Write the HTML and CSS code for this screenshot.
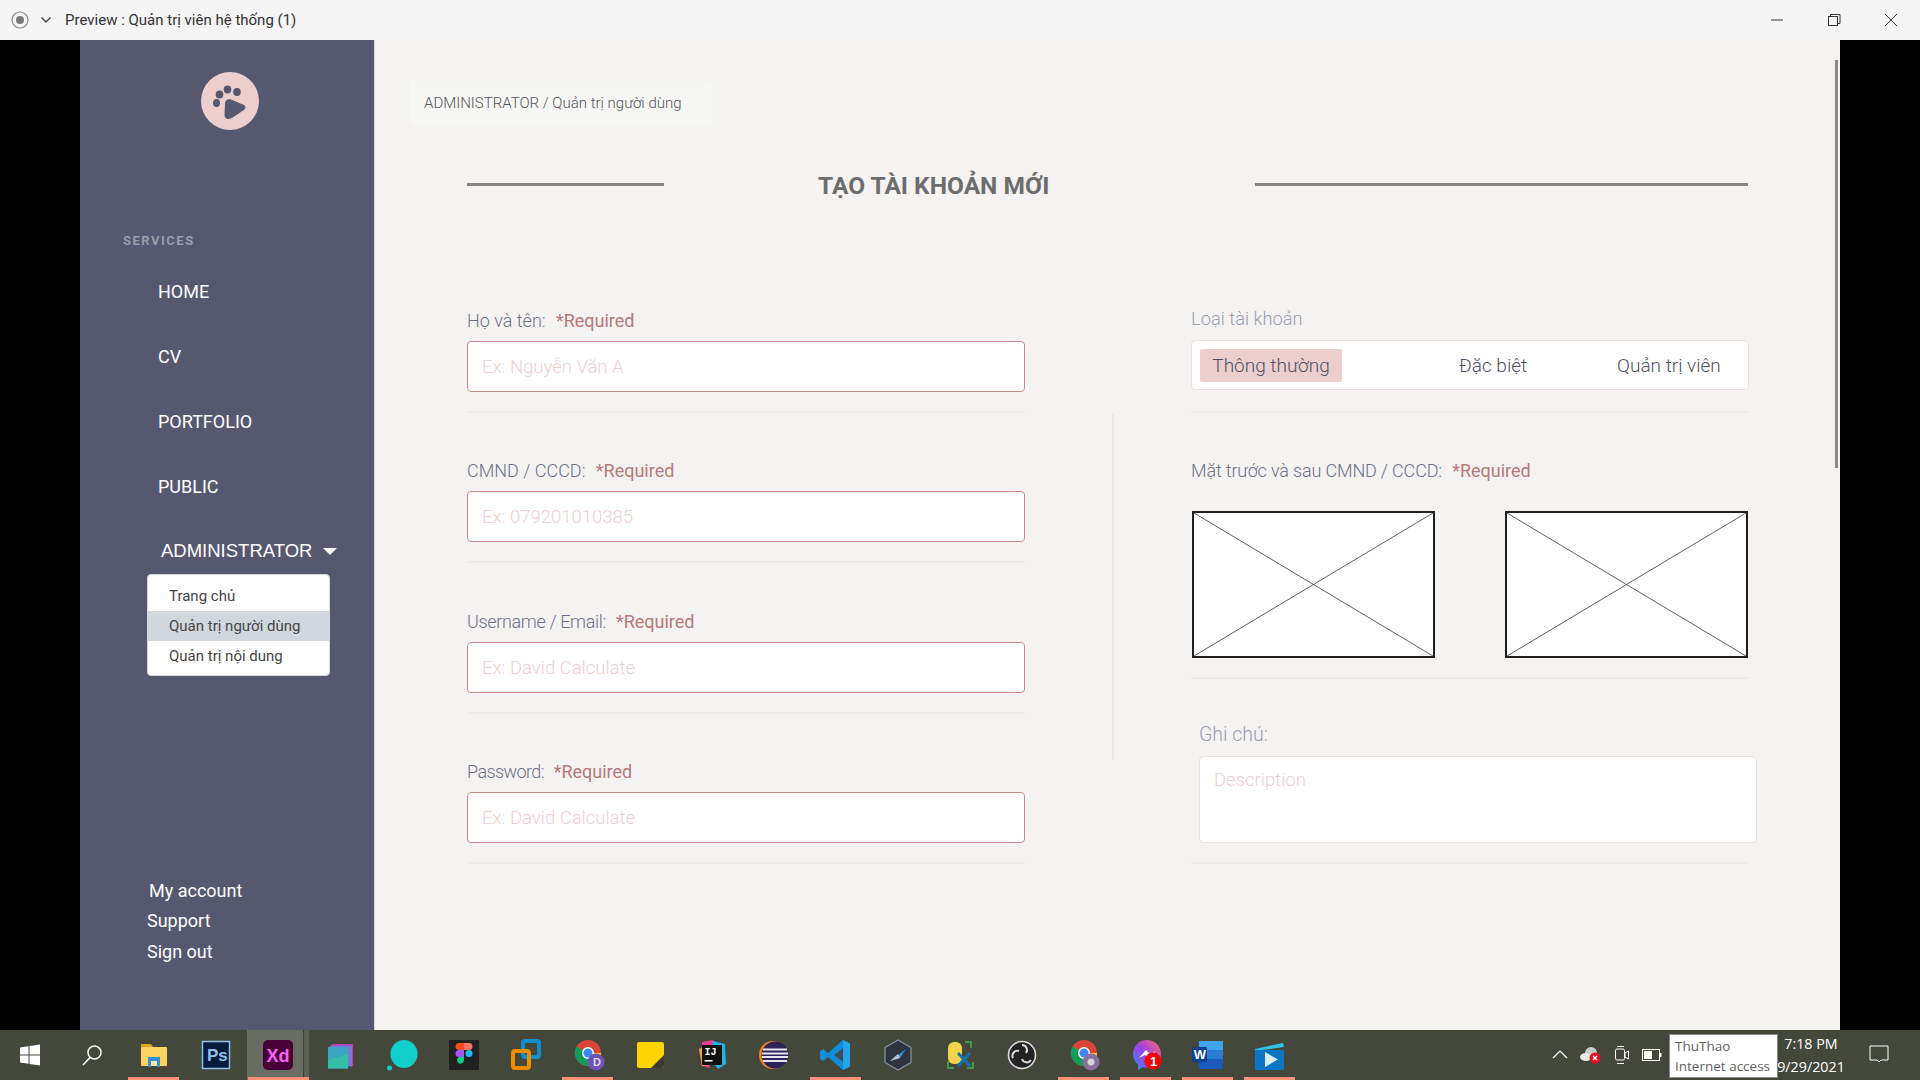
FILE: index.html
```html
<!DOCTYPE html>
<html lang="vi">
<head>
    <meta charset="UTF-8">
    <title>Preview : Quản trị viên hệ thống (1)</title>
    <link rel="stylesheet" href="styles.css">
</head>
<body>
    <header class="titlebar">
        <svg class="rec" width="18" height="18" viewBox="0 0 18 18"><circle cx="9" cy="9" r="8" fill="none" stroke="#8a8a8a" stroke-width="1.2"/><circle cx="9" cy="9" r="4" fill="#7a7a7a"/></svg>
        <svg class="drop" width="12" height="12" viewBox="0 0 12 12"><path d="M1.5 3.5 6 8l4.5-4.5" fill="none" stroke="#444" stroke-width="1.4"/></svg>
        <span class="titlebar-text">Preview : Quản trị viên hệ thống (1)</span>
        <div class="win-btns">
            <svg width="14" height="14" viewBox="0 0 14 14"><path d="M1 7h12" stroke="#333" stroke-width="1"/></svg>
            <svg width="14" height="14" viewBox="0 0 14 14"><path d="M3.5 3V1.5h9.500v9H11" fill="none" stroke="#333"/><rect x="1.500" y="3.500" width="9" height="9" fill="none" stroke="#333"/></svg>
            <svg width="14" height="14" viewBox="0 0 14 14"><path d="M1 1l12 12M13 1 1 13" stroke="#333" stroke-width="1"/></svg>
        </div>
    </header>

    <div class="stage">
        <aside class="sidebar">
            <div class="logo">
                <svg width="58" height="58" viewBox="0 0 58 58">
                    <circle cx="29" cy="29" r="29" fill="#eccfcc"/>
                    <g fill="#55586f">
                        <ellipse cx="15.500" cy="31" rx="3.500" ry="4"/>
                        <ellipse cx="18.500" cy="22.500" rx="3.800" ry="4"/>
                        <ellipse cx="26.500" cy="17.500" rx="3.800" ry="4"/>
                        <ellipse cx="36" cy="20" rx="3.800" ry="4"/>
                        <path d="M24 31Q25 26 30 27.500L43 33Q46 35.500 43 38L31 46Q24 49 23.500 43z"/>
                    </g>
                </svg>
            </div>
            <div class="side-heading">SERVICES</div>
            <nav class="side-nav">
                <a class="side-link">HOME</a>
                <a class="side-link">CV</a>
                <a class="side-link">PORTFOLIO</a>
                <a class="side-link">PUBLIC</a>
            </nav>
            <div class="side-admin">ADMINISTRATOR <span class="caret"></span></div>
            <ul class="admin-menu">
                <li>Trang chủ</li>
                <li class="active">Quản trị người dùng</li>
                <li>Quản trị nội dung</li>
            </ul>
            <div class="side-bottom">
                <a class="acc">My account</a>
                <a>Support</a>
                <a>Sign out</a>
            </div>
        </aside>

        <main class="main">
            <div class="breadcrumb">ADMINISTRATOR / Quản trị người dùng</div>
            <div class="heading">
                <span class="heading-line short"></span>
                <h1>TẠO TÀI KHOẢN MỚI</h1>
                <span class="heading-line"></span>
            </div>

            <form class="form">
                <div class="col">
                    <div class="field">
                        <label>Họ và tên: <em>*Required</em></label>
                        <input type="text" placeholder="Ex: Nguyễn Văn A">
                    </div>
                    <div class="field">
                        <label>CMND / CCCD: <em>*Required</em></label>
                        <input type="text" placeholder="Ex: 079201010385">
                    </div>
                    <div class="field field-tall">
                        <label class="tight">Username / Email: <em>*Required</em></label>
                        <input type="text" placeholder="Ex: David Calculate">
                    </div>
                    <div class="field">
                        <label class="tighter">Password: <em>*Required</em></label>
                        <input type="text" placeholder="Ex: David Calculate">
                    </div>
                </div>

                <div class="col-rule"></div>

                <div class="col">
                    <div class="field field-types">
                        <label class="faint">Loại tài khoản</label>
                        <div class="types">
                            <span class="type on">Thông thường</span>
                            <span class="type t2">Đặc biệt</span>
                            <span class="type t3">Quản trị viên</span>
                        </div>
                    </div>
                    <div class="field field-images">
                        <label class="slight">Mặt trước và sau CMND / CCCD: <em>*Required</em></label>
                        <div class="images">
                            <svg class="ph" viewBox="0 0 243 147" preserveAspectRatio="none"><path d="M0 0 243 147M243 0 0 147" stroke="#333" stroke-width=".8" fill="none"/></svg>
                            <svg class="ph" viewBox="0 0 243 147" preserveAspectRatio="none"><path d="M0 0 243 147M243 0 0 147" stroke="#333" stroke-width=".8" fill="none"/></svg>
                        </div>
                    </div>
                    <div class="field field-note">
                        <label class="faint">Ghi chú:</label>
                        <textarea placeholder="Description"></textarea>
                    </div>
                </div>
            </form>
            <div class="scroll-thumb"></div>
        </main>
    </div>

    <footer class="taskbar">
        <div class="task start">
            <svg width="24" height="24" viewBox="0 0 24 24" fill="#fff"><path d="M2 4.500 10.500 3.300V11.500H2zM11.500 3.100 22 1.600V11.500H11.500zM2 12.500h8.500v8.200L2 19.500zM11.500 12.500H22v9.900l-10.500-1.500z"/></svg>
        </div>
        <div class="task start">
            <svg width="24" height="24" viewBox="0 0 24 24" fill="none" stroke="#fff" stroke-width="1.500"><circle cx="14.500" cy="9.500" r="6.500"/><path d="M10 14.500 3 22"/></svg>
        </div>
        <div class="task open">
            <svg width="30" height="30" viewBox="0 0 30 30"><path d="M2 4h10l2 3h-12z" fill="#e0a526"/><rect x="2" y="7" width="26" height="19" rx="1" fill="#fdd35f"/><path d="M9 17h12v10h-3v-6h-6v6H9z" fill="#2f8fdc"/><rect x="12" y="21" width="6" height="5" fill="#fbe3a0"/></svg>
        </div>
        <div class="task">
            <svg width="30" height="30" viewBox="0 0 30 30"><rect x="1.500" y="1.500" width="27" height="27" fill="#0a1a3d" stroke="#8fc0ec" stroke-width="1.500"/><text class="ico-text ps" x="6" y="21">Ps</text></svg>
        </div>
        <div class="task open xd">
            <svg width="30" height="30" viewBox="0 0 30 30"><rect width="30" height="30" rx="5" fill="#470137"/><text class="ico-text xdt" x="3.500" y="21.500">Xd</text></svg>
        </div>
        <div class="task">
            <svg width="30" height="30" viewBox="0 0 30 30"><path d="M7 4h21v22H7z" fill="#c43bb6"/><path d="M5 5.500h22v21H5z" fill="#7e74dd"/><path d="M3 7h20v21.500H3z" fill="#3da5c4"/><path d="M3 20l20-6v14.500H3z" fill="#36bfa8"/></svg>
        </div>
        <div class="task">
            <svg width="32" height="32" viewBox="0 0 32 32"><ellipse cx="18" cy="15" rx="13.500" ry="14" fill="#11cfcb"/><circle cx="3.500" cy="29" r="2.500" fill="#11cfcb"/></svg>
        </div>
        <div class="task">
            <svg width="30" height="30" viewBox="0 0 30 30"><rect width="30" height="30" rx="1" fill="#222"/><path d="M10 3h5v7h-5a3.500 3.500 0 0 1 0-7z" fill="#f24e1e"/><path d="M15 3h5a3.500 3.500 0 0 1 0 7h-5z" fill="#ff7262"/><path d="M10 10h5v7h-5a3.500 3.500 0 0 1 0-7z" fill="#a259ff"/><circle cx="20" cy="13.500" r="3.500" fill="#1abcfe"/><path d="M10 17h5v3.500a3.500 3.500 0 1 1-5-3.500z" fill="#0acf83"/></svg>
        </div>
        <div class="task">
            <svg width="32" height="32" viewBox="0 0 32 32" fill="none"><rect x="13" y="2" width="16" height="16" rx="2" stroke="#0f8fd0" stroke-width="4"/><rect x="3" y="12" width="16" height="17" rx="2" stroke="#f08c00" stroke-width="4"/></svg>
        </div>
        <div class="task open">
            <svg class="nudge" width="32" height="32" viewBox="0 0 32 32"><circle cx="14" cy="14" r="13" fill="#db4437"/><path d="M14 27a13 13 0 0 1-11.300-19.500L14 14z" fill="#0f9d58"/><path d="M14 14h13a13 13 0 0 1-13 13z" fill="#ffcd40"/><circle cx="14" cy="14" r="6" fill="#fff"/><circle cx="14" cy="14" r="4.500" fill="#4285f4"/><circle cx="22" cy="23" r="8.500" fill="#6f53b8"/><text class="ico-text small" x="19" y="27">D</text></svg>
        </div>
        <div class="task">
            <svg width="30" height="30" viewBox="0 0 30 30"><rect x="2" y="2" width="27" height="26" rx="2" fill="#ffd400"/><path d="M29 15 16 28h11a2 2 0 0 0 2-2z" fill="#3c3c36"/></svg>
        </div>
        <div class="task">
            <svg width="32" height="32" viewBox="0 0 32 32"><path d="M6 3l11-2 5 8-9 20-8-3z" fill="#f0399b"/><path d="M17 2l12 3 1 20-8 5-6-8z" fill="#1db4e8"/><path d="M3 10l8-4 3 20-8 1z" fill="#f6a13a"/><rect x="6" y="6" width="20" height="20" fill="#111"/><text class="ico-text ij" x="8.500" y="16">IJ</text><rect x="8.500" y="21" width="8" height="1.500" fill="#fff"/></svg>
        </div>
        <div class="task">
            <svg width="32" height="32" viewBox="0 0 32 32"><circle cx="15" cy="16" r="14" fill="#e8851e"/><circle cx="17" cy="16" r="13.500" fill="#2c2255"/><path d="M5 10.500h24M4 14.500h26M4 18h26M5 22h24" stroke="#e8e6f2" stroke-width="2"/></svg>
        </div>
        <div class="task open">
            <svg width="32" height="32" viewBox="0 0 32 32"><path d="M23 1 30 4.500v23L23 31 8 18l-5 4-3-2v-8l3-2 5 4z" fill="#0f8ed8"/><path d="M23 1 30 4.500v23L23 31V22l-8-6 8-6z" fill="#23a5ec"/><path d="M23 9v14l-9-7z" fill="#43484c" opacity=".95"/></svg>
        </div>
        <div class="task">
            <svg width="30" height="32" viewBox="0 0 30 32"><path d="M15 1 28 8.500v15L15 31 2 23.500v-15z" fill="#2e3340" stroke="#8b93a3" stroke-width="1.200"/><path d="M7 22 23 10l-6 9z" fill="#2f8fe6"/><path d="M7 22l8-7 2 4z" fill="#bcc3cf"/></svg>
        </div>
        <div class="task">
            <svg width="30" height="30" viewBox="0 0 30 30"><rect x="3" y="2" width="14" height="22" rx="6" fill="#f2d34a"/><path d="M20 2h6v6M3 21v7h6M22 28h6v-6" fill="none" stroke="#3e9a48" stroke-width="2"/><path d="M13 26 25 13M13 13l12 13" stroke="#1273b5" stroke-width="3"/></svg>
        </div>
        <div class="task">
            <svg width="30" height="30" viewBox="0 0 30 30"><circle cx="15" cy="15" r="13.500" fill="#222" stroke="#dcdcdc" stroke-width="1.600"/><g fill="none" stroke="#dcdcdc" stroke-width="2"><path d="M15 5a5 5 0 0 1 4 8"/><path d="M24 20a5 5 0 0 1-9-1"/><path d="M6 18a5 5 0 0 1 6-7"/></g></svg>
        </div>
        <div class="task open">
            <svg class="nudge" width="32" height="32" viewBox="0 0 32 32"><circle cx="14" cy="14" r="13" fill="#db4437"/><path d="M14 27a13 13 0 0 1-11.300-19.500L14 14z" fill="#0f9d58"/><path d="M14 14h13a13 13 0 0 1-13 13z" fill="#ffcd40"/><circle cx="14" cy="14" r="6" fill="#fff"/><circle cx="14" cy="14" r="4.500" fill="#4285f4"/><circle cx="21" cy="23" r="8.500" fill="#8a6e9e"/><circle cx="21" cy="23" r="3.500" fill="#d9d2dc"/></svg>
        </div>
        <div class="task open">
            <svg class="nudge" width="32" height="32" viewBox="0 0 32 32"><defs><linearGradient id="msg" x1="0" y1="1" x2="1" y2="0"><stop offset="0" stop-color="#2f8cf5"/><stop offset=".5" stop-color="#a040e8"/><stop offset="1" stop-color="#ff6a6a"/></linearGradient></defs><path d="M15 1C7 1 1 7 1 15c0 4.500 2 8 5 10.500V31l5-3c1.300.4 2.600.5 4 .5 8 0 14-6 14-13.500S23 1 15 1z" fill="url(#msg)"/><path d="M7 19l7-8 4 4 6-3-7 8-4-4z" fill="#fff"/><circle cx="21" cy="22" r="8.500" fill="#f00"/><text class="ico-text badge" x="18" y="27">1</text></svg>
        </div>
        <div class="task open">
            <svg width="32" height="30" viewBox="0 0 32 30"><rect x="7" y="1" width="24" height="28" rx="1.500" fill="#185abd"/><rect x="7" y="1" width="24" height="9" fill="#41a5ee"/><rect x="7" y="10" width="24" height="9" fill="#2b7cd3"/><rect x="0" y="7" width="15" height="15" rx="1" fill="#103f91"/><text class="ico-text w" x="1.800" y="19">W</text></svg>
        </div>
        <div class="task open">
            <svg width="32" height="32" viewBox="0 0 32 32"><path d="M1 10 29 4l1 4-29 4z" fill="#2fc2e8"/><rect x="1" y="11" width="29" height="20" fill="#0c75c4"/><path d="M11 13v15l13-7.500z" fill="#d6eefb"/></svg>
        </div>

        <div class="tray">
            <svg width="16" height="16" viewBox="0 0 16 16"><path d="M1 11 8 4l7 7" fill="none" stroke="#fff" stroke-width="1.200"/></svg>
            <svg width="22" height="18" viewBox="0 0 22 18"><circle cx="11" cy="7" r="6" fill="#c9c9c9"/><ellipse cx="6" cy="11" rx="6" ry="4" fill="#e8e8e8"/><circle cx="15" cy="12" r="5.500" fill="#e81123"/><path d="M13 10l4 4M17 10l-4 4" stroke="#fff" stroke-width="1.300"/></svg>
            <svg width="16" height="20" viewBox="0 0 16 20" fill="none" stroke="#fff" stroke-width="1"><rect x="1.500" y="4" width="9" height="11" rx="1.500"/><path d="M11 8l3.500-2v8L11 12zM3 1.500h7M3 18.500h7"/></svg>
            <svg width="20" height="12" viewBox="0 0 20 12"><rect x=".5" y=".5" width="17" height="11" fill="none" stroke="#fff"/><rect x="2" y="2" width="8" height="8" fill="#fff"/><rect x="18" y="4" width="1.500" height="4" fill="#fff"/></svg>
        </div>
        <div class="clock">
            <span>7:18 PM</span>
            <span>9/29/2021</span>
        </div>
        <svg class="notify" width="20" height="20" viewBox="0 0 20 20"><path d="M1 2h18v14h-7l-2 2-2-2H1z" fill="none" stroke="#fff" stroke-width="1"/></svg>
        <div class="tooltip">ThuThao<br>Internet access</div>
    </footer>
</body>
</html>
```

FILE: styles.css
```css
* {
    box-sizing: border-box;
}

html, body {
    margin: 0;
    height: 100%;
}

body {
    width: 1920px;
    height: 1080px;
    display: flex;
    flex-direction: column;
    overflow: hidden;
    font-family: Roboto, "Noto Sans", sans-serif;
    background-color: #000;
}

/* window title */
.titlebar {
    height: 40px;
    flex: none;
    display: flex;
    align-items: center;
    background-color: #f5f5f5;
    padding-left: 11px;
}

.drop {
    margin-left: 11px;
}

.titlebar-text {
    margin-left: 13px;
    font-size: 15px;
    color: #333;
}

.win-btns {
    margin-left: auto;
    display: flex;
    gap: 43px;
    padding-right: 22px;
}

.stage {
    flex: 1;
    display: flex;
    padding: 0 80px;
    min-height: 0;
}

/* sidebar */
.sidebar {
    width: 295px;
    flex: none;
    display: flex;
    flex-direction: column;
    background-color: #55586f;
    border-right: 1px solid #d5d5da;
    color: #fff;
}

.logo {
    margin: 32px 0 0 121px;
    height: 58px;
}

.side-heading {
    margin: 103px 0 0 43px;
    font-size: 13px;
    line-height: 16px;
    font-weight: 700;
    letter-spacing: 1.5px;
    color: #9a9cab;
}

.side-nav {
    display: flex;
    flex-direction: column;
    margin: 30px 0 0 78px;
    gap: 40px;
}

.side-link {
    font-size: 18px;
    line-height: 25px;
}

.side-admin {
    margin: 40px 0 0 81px;
    font-family: "Liberation Sans", sans-serif;
    font-size: 18.500px;
    line-height: 24px;
    white-space: nowrap;
}

.caret {
    display: inline-block;
    margin-left: 5px;
    vertical-align: 2px;
    border-left: 7.500px solid transparent;
    border-right: 7.500px solid transparent;
    border-top: 7px solid #fff;
}

.admin-menu {
    list-style: none;
    margin: 11px 0 0 67px;
    padding: 6px 0;
    width: 183px;
    height: 102px;
    background-color: #fff;
    border: 1px solid #d8d8de;
    border-radius: 4px;
    color: #444;
    font-size: 15px;
}

.admin-menu li {
    height: 30px;
    line-height: 30px;
    padding-left: 21px;
}

.admin-menu .active {
    background-color: #d2d7dd;
}

.side-bottom {
    margin-top: auto;
    padding: 0 0 63px 67px;
    display: flex;
    flex-direction: column;
    font-size: 18px;
    line-height: 30.500px;
}

.acc {
    margin-left: 2px;
}

/* main panel */
.main {
    flex: 1;
    position: relative;
    background-color: #f4f3f2;
    padding-top: 41px;
    min-width: 0;
}

.breadcrumb {
    margin-left: 35px;
    width: 302px;
    height: 44px;
    padding-left: 14px;
    background-color: #f6f6f5;
    border-radius: 4px;
    font-size: 15px;
    font-weight: 300;
    line-height: 44px;
    color: #555;
}

.heading {
    margin: 40px 0 0 92px;
    width: 1281px;
    height: 40px;
    display: flex;
    align-items: center;
}

.heading h1 {
    margin: 0 206px 0 154px;
    font-size: 24.500px;
    font-weight: 700;
    white-space: nowrap;
    color: #6d6d6d;
}

.heading-line {
    flex: 1;
    height: 3px;
    margin-bottom: 2px;
    background-color: #858585;
}

.heading-line.short {
    flex: none;
    width: 197px;
}

.form {
    margin: 58px 0 0 92px;
    display: grid;
    grid-template-columns: 558px 166px 558px;
}

.field {
    height: 150px;
    padding-bottom: 19px;
    display: flex;
    flex-direction: column;
    justify-content: flex-end;
    border-bottom: 2px solid #eeeaea;
}

.field-tall {
    height: 151px;
}

.field label {
    height: 24px;
    margin-bottom: 8px;
    font-size: 18px;
    line-height: 24px;
    font-weight: 300;
    color: #6e7088;
}

.field label.faint {
    color: #9c9eb0;
    font-size: 18.300px;
}

.field label.tight {
    letter-spacing: -.35px;
}

.field label.tighter {
    letter-spacing: -.6px;
}

.field label.slight {
    letter-spacing: -.16px;
}

.field em {
    margin-left: 6px;
    font-style: normal;
    font-weight: 400;
    letter-spacing: 0;
    color: #b87878;
}

.field input, .field textarea {
    display: block;
    width: 100%;
    height: 51px;
    padding: 0 14px;
    background-color: #fff;
    border: 1px solid #c98a8a;
    border-radius: 4px;
    font-family: Roboto, "Noto Sans", sans-serif;
    font-size: 18.500px;
    font-weight: 300;
    outline: none;
}

.field input::placeholder, .field textarea::placeholder {
    color: #edcfce;
    opacity: 1;
}

.col-rule {
    justify-self: start;
    margin: 150px 0 0 87px;
    width: 2px;
    height: 347px;
    background-color: #e9e7e6;
}

.field-types {
    padding-bottom: 21px;
}

.field-types label.faint {
    margin-bottom: 9px;
}

.types {
    height: 50px;
    display: flex;
    align-items: center;
    margin-top: 0;
    background-color: #fff;
    border: 1px solid #ecdfdf;
    border-radius: 4px;
    padding-left: 8px;
    font-size: 19px;
    font-weight: 300;
    color: #4d5069;
}

.type.on {
    width: 142px;
    height: 33px;
    line-height: 33px;
    text-align: center;
    background-color: #eccfcc;
    border-radius: 2px;
}

.type.t2 {
    margin-left: 117px;
}

.type.t3 {
    margin-left: 90px;
}

.field-images {
    height: 266px;
}

.images {
    display: flex;
    justify-content: space-between;
    padding: 0 1px;
    margin-top: 20px;
}

.ph {
    width: 243px;
    height: 147px;
    background-color: #fff;
    border: 2px solid #1f1f1f;
}

.field-note {
    height: 185px;
}

.field-note label, .field-note label.faint {
    margin-left: 8px;
    margin-bottom: 9px;
    font-size: 19.500px;
}

.field-note textarea {
    margin-left: 8px;
    width: 558px;
    height: 87px;
    padding-top: 12px;
    border-color: #ecdfdf;
    resize: none;
}

.scroll-thumb {
    position: absolute;
    top: 20px;
    right: 2px;
    width: 3px;
    height: 408px;
    background-color: #8a8a8a;
}

/* windows taskbar */
.taskbar {
    height: 50px;
    flex: none;
    position: relative;
    display: flex;
    align-items: center;
    background-color: #43483b;
}

.task {
    position: relative;
    width: 62px;
    height: 50px;
    flex: none;
    display: flex;
    align-items: center;
    justify-content: center;
}

.task.start {
    width: 60px;
}

.task.start + .task.start {
    width: 63px;
}

.task.open::after {
    content: "";
    position: absolute;
    left: 5px;
    right: 6px;
    bottom: 0;
    height: 3px;
    background-color: #ff8f77;
}

.task .nudge {
    margin-left: 3px;
}

.task.xd {
    background: linear-gradient(to right, #686d61 56px, #3c4036 56px, #3c4036 57px, #5c6155 57px);
}

.task.xd::after {
    left: 1px;
    right: 0;
}

.ico-text {
    font-family: "Liberation Sans", sans-serif;
    font-weight: 700;
    fill: #fff;
}

.ps {
    font-size: 17px;
    fill: #8fc0ec;
}

.xdt {
    font-size: 18px;
    fill: #ff61f6;
}

.small {
    font-size: 11px;
    fill: #ddd;
}

.ij {
    font-size: 10px;
    font-family: "Liberation Mono", monospace;
}

.badge {
    font-size: 13px;
}

.w {
    font-size: 13px;
}

.tray {
    position: absolute;
    left: 1552px;
    top: 0;
    height: 50px;
    display: flex;
    align-items: center;
    gap: 12px;
}

.clock {
    position: absolute;
    left: 1770px;
    width: 82px;
    top: 0;
    height: 50px;
    display: flex;
    flex-direction: column;
    justify-content: center;
    align-items: center;
    font-family: "Open Sans", sans-serif;
    font-size: 14.300px;
    line-height: 23px;
    color: #fff;
}

.notify {
    position: absolute;
    left: 1869px;
    top: 14px;
}

.tooltip {
    position: absolute;
    left: 1669px;
    top: 4px;
    width: 109px;
    height: 44px;
    padding: 1px 5px;
    background-color: #fff;
    border: 1px solid #8a8a8a;
    font-family: "Open Sans", sans-serif;
    font-size: 13.500px;
    line-height: 20px;
    color: #5f5f5f;
    white-space: nowrap;
}
```
